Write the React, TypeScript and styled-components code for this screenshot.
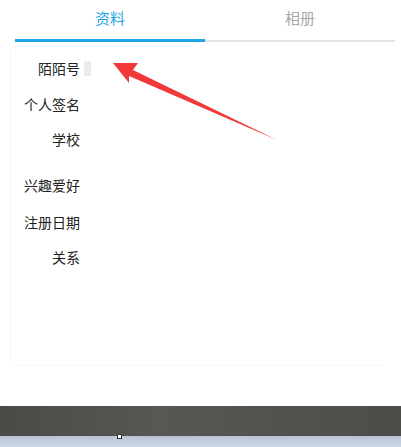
import styled, { createGlobalStyle } from "styled-components";

const GlobalStyle = createGlobalStyle`
  html, body {
    margin: 0;
    padding: 0;
    background: #ffffff;
    font-family: "Noto Sans CJK SC", "Liberation Sans", sans-serif;
  }
`;

const Page = styled.div`
  position: relative;
  width: 401px;
  height: 447px;
  display: flex;
  flex-direction: column;
  background: #fff;
  overflow: hidden;
`;

const Tabs = styled.div`
  display: flex;
  align-items: flex-end;
  margin: 0 6px 0 15px;
  height: 42px;
`;

const Tab = styled.div<{ $active?: boolean }>`
  flex: 1;
  display: flex;
  align-items: center;
  justify-content: center;
  padding-bottom: 4px;
  font-size: 15px;
  box-sizing: border-box;
  height: 42px;
  color: ${(p) => (p.$active ? "#27a6e3" : "#a8a8a8")};
  border-bottom: ${(p) => (p.$active ? "3px solid #1fa5e6" : "2px solid #e4e4e4")};
  margin-bottom: ${(p) => (p.$active ? "0" : "0.5px")};
`;

const Content = styled.div`
  flex: none;
  height: 315px;
  margin: 8px 16px 0 10px;
  border-left: 1px solid #f6f6f6;
  border-bottom: 1px solid #f8f8f8;
`;

const List = styled.div`
  display: flex;
  flex-direction: column;
`;

const Row = styled.div<{ $gap: number }>`
  display: flex;
  align-items: center;
  height: 36px;
  margin-top: ${(p) => p.$gap}px;
`;

const Label = styled.div`
  width: 69px;
  text-align: right;
  font-size: 14px;
  line-height: 20px;
  color: #222;
`;

const Box = styled.span`
  width: 7px;
  height: 15px;
  margin-left: 4px;
  background: #ececec;
`;

const Spacer = styled.div`
  flex: 1;
`;

const Taskbar = styled.div`
  height: 30px;
  background: linear-gradient(90deg, #4a4b47, #575852 40%, #4c4d49);
`;

const StartBar = styled.div`
  height: 11px;
  background: linear-gradient(180deg, #b8c4d6, #cdd6e6);
  display: flex;
  padding-left: 117px;
`;

const Dot = styled.div`
  width: 3px;
  height: 3px;
  border: 1px solid #333;
  background: #fff;
  margin-top: -2px;
`;

const Arrow = styled.svg`
  position: absolute;
  left: 0;
  top: 0;
  pointer-events: none;
`;

const rows: { label: string; gap: number; box?: boolean }[] = [
  { label: "陌陌号", gap: 0, box: true },
  { label: "个人签名", gap: 0 },
  { label: "学校", gap: -1 },
  { label: "兴趣爱好", gap: 10 },
  { label: "注册日期", gap: 1 },
  { label: "关系", gap: -1 },
];

export default function App() {
  return (
    <Page>
      <GlobalStyle />
      <Tabs>
        <Tab $active>资料</Tab>
        <Tab>相册</Tab>
      </Tabs>
      <Content>
        <List>
          {rows.map((r) => (
            <Row key={r.label} $gap={r.gap}>
              <Label>{r.label}</Label>
              {r.box && <Box />}
            </Row>
          ))}
        </List>
      </Content>
      <Spacer />
      <Taskbar />
      <StartBar>
        <Dot />
      </StartBar>
      <Arrow width="401" height="447" viewBox="0 0 401 447">
        <polygon
          points="113,63 138,63 133,70 277,140 129,76 129,83"
          fill="#f2393a"
        />
      </Arrow>
    </Page>
  );
}
